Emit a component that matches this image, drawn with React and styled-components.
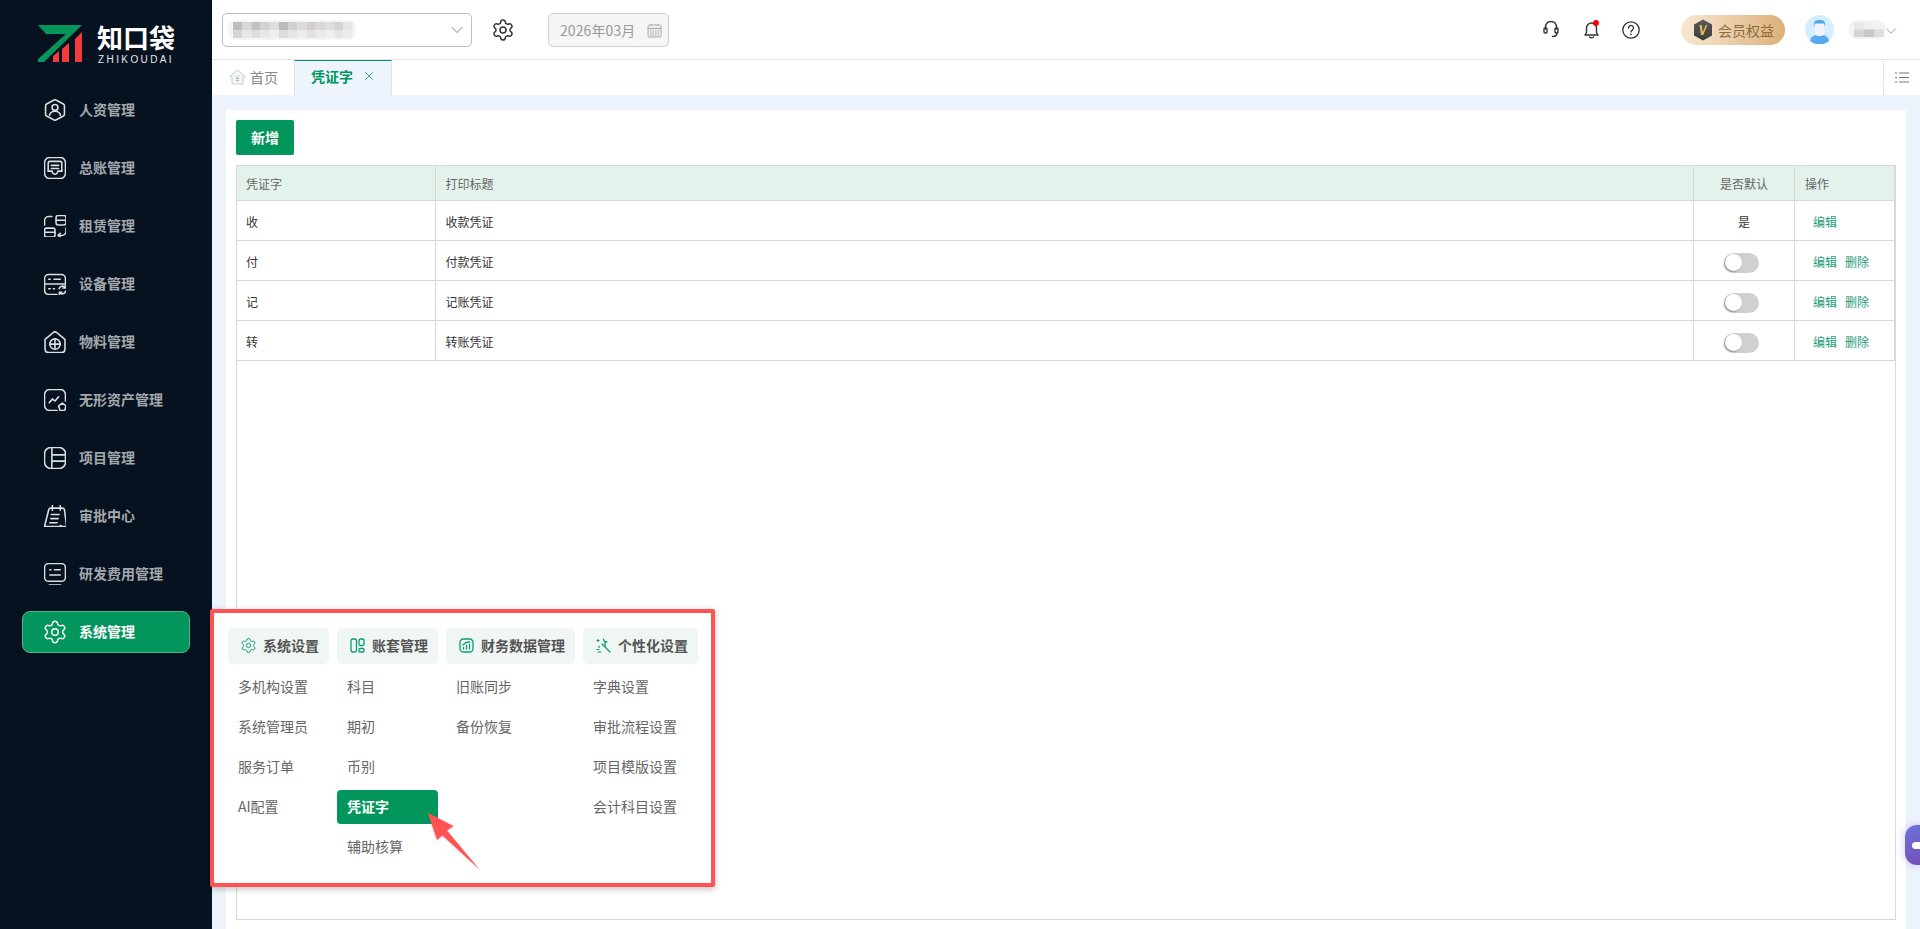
import React from "react";
import styled, { createGlobalStyle } from "styled-components";
import { Settings, ChevronDown, X } from "lucide-react";

const Global = createGlobalStyle`
  * { box-sizing: border-box; }
  html, body { margin: 0; padding: 0; height: 100%; overflow: hidden; }
  body { font-family: "Noto Sans CJK SC", "Noto Sans", sans-serif; color: #333; background: #edf3fd; }
`;

const Page = styled.div`position: relative; display: flex; width: 1920px; height: 929px; overflow: hidden;`;
const Sidebar = styled.aside`width: 212px; flex: none; background: #061220; display: flex; flex-direction: column;`;
const Logo = styled.div`height: 89px; padding: 25px 0 0 38px; display: flex; gap: 15px; align-items: flex-start;`;
const LogoWords = styled.div`display: flex; flex-direction: column; color: #fff;`;
const LogoCn = styled.div`font-size: 26px; font-weight: 700; line-height: 24px;`;
const LogoEn = styled.div`font-family: "Liberation Sans", sans-serif; font-size: 10px; line-height: 10px; letter-spacing: 2.4px; margin-top: 6px; margin-left: 1px; color: #e6e8ea;`;
const Nav = styled.nav`display: flex; flex-direction: column; gap: 16px; padding: 0 22px;`;
const NavItem = styled.div`
  height: 42px; display: flex; align-items: center; gap: 13px; padding-left: 21px; border-radius: 8px;
  border: 1px solid ${p => (p.$active ? "#4fb58d" : "transparent")};
  background: ${p => (p.$active ? "#03965c" : "transparent")};
  color: ${p => (p.$active ? "#fff" : "#a4a8ad")};
  font-size: 14px; font-weight: 700;
  svg { flex: none; color: ${p => (p.$active ? "#fff" : "#dcdee0")}; }
`;
const NavLabel = styled.span`padding-bottom: 2px;`;
const NavGear = styled(Settings)`margin: -2px;`;

const Content = styled.div`flex: 1; min-width: 0; display: flex; flex-direction: column;`;
const Header = styled.header`height: 60px; flex: none; background: #fff; border-bottom: 1px solid #e4e4e4; display: flex; align-items: center; padding: 0 20px 0 10px;`;
const SelectBox = styled.div`width: 250px; height: 34px; margin-top: 1px; border: 1px solid #bdbdbd; border-radius: 5px; display: flex; align-items: center; justify-content: space-between; padding: 0 4px 0 5px; svg.chev { color: #7a8a99; }`;
const GearBtn = styled.div`margin-left: 19px; display: flex; color: #333;`;
const DateBox = styled.div`margin-left: 33px; width: 121px; height: 34px; margin-top: 1px; border: 1px solid #cfcfcf; border-radius: 5px; background: #f5f5f5; color: #999; font-size: 14px; letter-spacing: 0.1px; display: flex; align-items: center; padding-left: 11px; gap: 12px;`;
const HeadRight = styled.div`margin-left: auto; display: flex; align-items: center;`;
const Tool = styled.div`display: flex; position: relative; color: #333; margin-right: ${p => p.$mr}px;`;
const RedDot = styled.span`position: absolute; top: 0; right: 0; width: 6px; height: 6px; background: #f00; border-radius: 50%;`;
const Vip = styled.div`width: 104px; height: 30px; border-radius: 15px; background: linear-gradient(90deg, #f8e8d3, #dcb079); display: flex; align-items: center; padding-left: 12px; gap: 5px; font-size: 14px; color: #8c6b40; margin-left: 41px; margin-right: 20px;`;
const NameBox = styled.div`display: flex; align-items: center; margin-left: 15px; color: #7a8a99; svg.chev { margin-left: -3px; margin-top: 3px; }`;

const Tabs = styled.div`height: 35px; flex: none; background: #fff; display: flex; align-items: stretch;`;
const HomeTab = styled.div`width: 82px; display: flex; align-items: center; padding: 0 0 2px 17px; gap: 4px; color: #888; font-size: 14px;`;
const ActiveTab = styled.div`width: 98px; background: #eef4fd; border: 1px solid #dfe3e8; border-top: 1px solid #03965c; border-bottom: none; display: flex; align-items: center; padding: 0 0 4px 16px; color: #03965c; font-size: 14px; font-weight: 700; gap: 9px; svg { stroke-width: 1.3; }`;
const TabMenu = styled.div`margin-left: auto; width: 37px; border-left: 1px solid #e6e6e6; display: flex; align-items: center; justify-content: center; color: #777;`;

const Main = styled.main`flex: 1; min-height: 0; padding: 15px 14px 0;`;
const Card = styled.section`height: 100%; background: #fff; padding: 10px 10px 9px; display: flex; flex-direction: column;`;
const AddBtn = styled.button`width: 58px; height: 35px; border: 0; border-radius: 2px; background: #03965c; color: #fff; font: 700 14px "Noto Sans CJK SC", sans-serif; padding: 0 0 2px; flex: none;`;
const Frame = styled.div`margin-top: 10px; flex: 1; border: 1px solid #d9d9d9;`;
const Table = styled.table`width: 100%; table-layout: fixed; border-collapse: collapse; font-size: 12px; margin-top: -1px; th:first-child, td:first-child { border-left: none; }`;
const Th = styled.th`height: 35px; background: #e4f2ec; border: 1px solid #d9d9d9; font-weight: 400; color: #666; text-align: ${p => (p.$center ? "center" : "left")}; padding: 0 0 0 ${p => (p.$center ? 0 : p.$pad || 9)}px; width: ${p => (p.$w ? `${p.$w}px` : "auto")};`;
const Td = styled.td`height: 40px; border: 1px solid #d9d9d9; color: #333; text-align: ${p => (p.$center ? "center" : "left")}; padding: 1px 0 0 ${p => (p.$center ? 0 : p.$pad || 9)}px;`;
const Switch = styled.span`display: inline-block; width: 35px; height: 20px; margin: 4px 5px 0 0; background: #d0d0d0; border-radius: 10px; vertical-align: middle; padding: 1px 0 0 1px;`;
const Knob = styled.span`display: block; width: 17px; height: 17px; background: #fff; border-radius: 50%; box-shadow: -1px 1px 2px rgba(0,0,0,.35);`;
const LinkAct = styled.a`color: #1f9b78; margin-right: 8px;`;

const Overlay = styled.div`position: absolute; left: 210px; top: 609px; width: 505px; height: 278px; border: 4px solid #ff5252; border-radius: 2px; background: #fff; box-shadow: 0 2px 6px rgba(0,0,0,.25); padding: 15px 14px; display: flex; gap: 8px;`;
const MenuCol = styled.div`width: ${p => p.$w}px; flex: none; display: flex; flex-direction: column; gap: 6px;`;
const Chip = styled.div`height: 36px; background: #eff6f3; border-radius: 5px; display: flex; align-items: center; padding: 0 0 2px 13px; gap: 7px; font-size: 14px; font-weight: 700; color: #555; svg { flex: none; color: #0f9a70; }`;
const ChipGear = styled(Settings)`margin: -1px;`;
const MenuItem = styled.div`height: 34px; border-radius: 4px; display: flex; align-items: center; padding: 0 0 2px 10px; font-size: 14px; color: ${p => (p.$active ? "#fff" : "#666")}; background: ${p => (p.$active ? "#03965c" : "transparent")}; font-weight: ${p => (p.$active ? 700 : 400)};`;
const ArrowSvg = styled.svg`position: absolute; left: 420px; top: 805px; filter: drop-shadow(0 1px 1px rgba(0,0,0,.15));`;
const ChatWidget = styled.div`position: absolute; right: 0; top: 825px; width: 15px; height: 40px; border-radius: 12px 0 0 12px; background: linear-gradient(160deg, #6a74dc, #7550b8); box-shadow: 0 0 8px rgba(100,90,220,.35); display: flex; align-items: center; padding-left: 7px;`;
const ChatDot = styled.span`width: 10px; height: 7px; background: #fff; border-radius: 4px 0 0 4px;`;

const Ic = ({ children, s = 22, box = "0.5 0.5 21 21", w = 1.5 }) => (
  <svg width={s} height={s} viewBox={box} fill="none" stroke="currentColor" strokeWidth={w} strokeLinecap="round" strokeLinejoin="round">{children}</svg>
);

const icons = {
  hr: <Ic><path d="M11 1 19 5.300a2 2 0 0 1 1 1.700v8a2 2 0 0 1-1 1.700L11 21l-8-4.300A2 2 0 0 1 2 15V7a2 2 0 0 1 1-1.700Z"/><circle cx="11" cy="8.500" r="2.800"/><path d="M5.800 16c.6-2.600 2.600-3.800 5.200-3.800s4.600 1.200 5.200 3.800"/></Ic>,
  ledger: <Ic><rect x="1" y="1" width="20" height="20" rx="5"/><path d="M4.500 14V6.200A1.500 1.500 0 0 1 6 4.700h10a1.500 1.500 0 0 1 1.500 1.500V14"/><path d="M7.500 8.500h7M7.500 11.500h7"/><path d="M4.500 14h3.700c.5 1.800 1.500 3 2.800 3s2.300-1.200 2.800-3h3.700"/></Ic>,
  lease: <Ic><path d="M1 10V6a4 4 0 0 1 4-4h3"/><rect x="12" y="1" width="9.500" height="9" rx="2"/><path d="M12 5.500h9.500"/><rect x="1" y="13" width="10" height="8.500" rx="2"/><path d="M1 17h10"/><path d="M21.500 13v3a4 4 0 0 1-4 4h-3"/><path d="m16 18-2 2 2 1.500"/></Ic>,
  device: <Ic><path d="M21 11V6a4 4 0 0 0-4-4H5a4 4 0 0 0-4 4v11a4 4 0 0 0 4 4h8"/><path d="M1 11h20"/><path d="M5 6.500h1.500M10 6.500h6M5 15.500h1.500M9.500 15.500h1"/><path d="M15 15.500a3 3 0 0 1 5.500-1M21 18a3 3 0 0 1-5.500 1"/><path d="M20.800 12.500v2.300h-2.300M15.200 21v-2.200h2.300"/></Ic>,
  material: <Ic><path d="M1.500 8.500 9 2.200a3 3 0 0 1 4 0l7.500 6.300V18a3 3 0 0 1-3 3h-13a3 3 0 0 1-3-3Z"/><circle cx="11" cy="13" r="5"/><path d="M11 8v10M6 13h10"/></Ic>,
  asset: <Ic><path d="M13 21H6a5 5 0 0 1-5-5V6a5 5 0 0 1 5-5h10a5 5 0 0 1 5 5v6"/><path d="M5.500 13.500 8.500 10l2.500 2 3.500-4"/><path d="m18 14 3.500 2.700-1.300 4.300h-4.400l-1.300-4.300Z"/></Ic>,
  project: <Ic><rect x="1" y="1" width="20" height="20" rx="6"/><path d="M8 1v20M8 8h13M8 14h13"/></Ic>,
  approve: <Ic><path d="M1 21 5 5a2 2 0 0 1 2-1.500h11A2 2 0 0 1 20 5l2 15a1 1 0 0 1-1 1Z"/><path d="M8.500 1v4.500M16 1v4.500M7.500 9.500H15M7 13.500h7M6 17.500h7"/><path d="m17.500 21-1.500-1"/></Ic>,
  rd: <Ic><rect x="1" y="1" width="20" height="17" rx="4"/><path d="M6 7h1M10.500 7H16M6 12h10M5.500 21.500h11"/></Ic>,
};

const navs = [
  ["人资管理", "hr"], ["总账管理", "ledger"], ["租赁管理", "lease"], ["设备管理", "device"], ["物料管理", "material"],
  ["无形资产管理", "asset"], ["项目管理", "project"], ["审批中心", "approve"], ["研发费用管理", "rd"],
];

const Mosaic = ({ w, h, cell, rows, bg }) => (
  <svg width={w} height={h} viewBox={`0 0 ${w} ${h}`}>
    <defs><filter id={`b${w}`}><feGaussianBlur stdDeviation="0.6" /></filter></defs>
    <rect width={w} height={h} rx={h / 2.5} fill={bg} />
    <g filter={`url(#b${w})`}>
      {rows.map((r, i) => r.map((c, j) => (
        <rect key={`${i}-${j}`} x={5 + j * cell} y={2 + i * (h - 4) / rows.length} width={cell} height={(h - 4) / rows.length} fill={c} />
      )))}
    </g>
  </svg>
);

const CalendarIcon = () => (
  <svg width="15" height="15" viewBox="0 0 15 15" fill="none" stroke="#aaa" strokeWidth="1">
    <rect x="1" y="2" width="13" height="12" rx="1.500" fill="#eee" />
    <path d="M1 5.500h13M4 1v2M11 1v2" />
    <path d="M3 8h9M3 10h9M3 12h9" strokeDasharray="1.500 1" />
  </svg>
);

const Headset = () => (
  <svg width="16" height="17" viewBox="0 0 16 17" fill="none" stroke="#333" strokeWidth="1.400" strokeLinecap="round">
    <path d="M2.500 8V6a5.500 5.500 0 0 1 11 0v2" />
    <rect x="1" y="7" width="3" height="5" rx="1" />
    <rect x="12" y="7" width="3" height="5" rx="1" />
    <path d="M14 12c0 2.500-2 3.500-4.500 3.500" />
  </svg>
);
const Bell = () => (
  <svg width="15" height="19" viewBox="0 0 15 19" fill="none" stroke="#333" strokeWidth="1.400" strokeLinejoin="round" strokeLinecap="round">
    <path d="M1 15h13l-1.500-2.500V8a5 5 0 0 0-10 0v4.500Z" />
    <path d="M5.500 17c.5 1 3.500 1 4 0" />
  </svg>
);
const Help = () => (
  <svg width="18" height="18" viewBox="0 0 18 18" fill="none" stroke="#333" strokeWidth="1.300" strokeLinecap="round">
    <circle cx="9" cy="9" r="8.200" />
    <path d="M6.500 7a2.500 2.500 0 1 1 3.800 2.100C9.400 9.700 9 10 9 11" />
    <path d="M9 13.200v.3" strokeWidth="1.600" />
  </svg>
);
const VipBadge = () => (
  <svg width="20" height="22" viewBox="0 0 20 22">
    <defs><linearGradient id="vipG" x1="0" y1="0" x2="0" y2="1"><stop offset="0" stopColor="#5a5a58" /><stop offset="1" stopColor="#3c3c3a" /></linearGradient></defs>
    <path d="M10 0.500 19 5.500v11L10 21.500 1 16.500v-11Z" fill="url(#vipG)" />
    <path d="M6.500 6h2.300l1 7 3-7h1.700l-4.300 10H8Z" fill="#e4b860" />
  </svg>
);
const Avatar = () => (
  <svg width="29" height="29" viewBox="0 0 29 29">
    <circle cx="14.500" cy="14.500" r="14.500" fill="#d4edff" />
    <path d="M5 26c1-5 5-6.500 9.500-6.500S23 21 24 26a14.500 14.500 0 0 1-19 0Z" fill="#56abf6" />
    <rect x="9.500" y="7" width="10" height="14" rx="4" fill="#f1f4fa" />
    <path d="M9 12V8.500C9 6 11 5 14.500 5S20 6 20 8.500V12l-1-3.500H10Z" fill="#4fa3f0" />
  </svg>
);
const HomeIcon = () => (
  <svg width="17" height="16" viewBox="0 0 17 16" fill="none" stroke="#c9ccd0" strokeWidth="1" strokeLinejoin="round">
    <path d="M1 7.500 8.500 1 16 7.500h-2V15H3V7.500Z" fill="#f6f7f8" />
    <path d="M6.500 6.500 8.500 9l2-2.500M6.500 9.500h4M6.500 11.500h4M8.500 9v4" strokeWidth=".8" stroke="#b8bcc0" />
  </svg>
);
const ListIcon = () => (
  <svg width="14" height="11" viewBox="0 0 14 11" stroke="#777" strokeWidth="1" fill="none">
    <path d="M0 1h2M4 1h10M0 5.500h2M4 5.500h10M0 10h2M4 10h10" />
  </svg>
);

const LayoutIcon = () => (
  <Ic s={15} box="0 0 15 15" w={1.300}><rect x="1" y="1" width="5.500" height="13" rx="1.500" /><rect x="9" y="1" width="5" height="6.500" rx="1.500" /><rect x="9" y="10.500" width="5" height="3.500" rx="1.200" /></Ic>
);
const ChartIcon = () => (
  <Ic s={15} box="0 0 15 15" w={1.300}><rect x="1" y="1" width="13" height="13" rx="3.500" /><path d="M4.500 11V9.500M7.500 11V7.500M10.500 11V6.500M4 7l3-2.500L10.500 4" /></Ic>
);
const WandIcon = () => (
  <Ic s={15} box="0 0 15 15" w={1.200}><path d="m6 6 8 8" /><path d="m7.500 1 .8 2.500 2.500.2-2 1.600.6 2.500" /><path d="M2 1.500v2M1 2.500h2M3 8v1.500M2 14h3M1 11.500h2" /></Ic>
);

const columns = [
  { w: 101, head: "系统设置", icon: <ChipGear size={17} strokeWidth={1.400} />, items: ["多机构设置", "系统管理员", "服务订单", "AI配置"] },
  { w: 101, head: "账套管理", icon: <LayoutIcon />, items: ["科目", "期初", "币别", "凭证字", "辅助核算"], active: "凭证字" },
  { w: 129, head: "财务数据管理", icon: <ChartIcon />, items: ["旧账同步", "备份恢复"] },
  { w: 115, head: "个性化设置", icon: <WandIcon />, items: ["字典设置", "审批流程设置", "项目模版设置", "会计科目设置"] },
];

const rows = [
  ["收", "收款凭证", true],
  ["付", "付款凭证", false],
  ["记", "记账凭证", false],
  ["转", "转账凭证", false],
];

const g = ["#bdbdc0", "#d8d8d8", "#c2c2c6", "#d2d2d2", "#dedede", "#bcbcc0", "#d0d0d4", "#dcdcdc", "#d2cec9", "#d8d8dc", "#dedede", "#d4d4d4", "#e6e6e6"];
const g2 = ["#d6d6d6", "#e8e8e8", "#dedede", "#e8e8e8", "#efefef", "#dcdcdc", "#e6e6e6", "#ececec", "#e4e2e0", "#eaeaea", "#efefef", "#e6e6e6", "#ececec"];

export default function App() {
  return (
    <Page>
      <Global />
      <Sidebar>
        <Logo>
          <svg width="44" height="37" viewBox="0 0 44 37">
            <path d="M0 0H44L6 37H0V34L28 9H8Z" fill="#06965a" />
            <path d="M15 37V31l6-5V37ZM24 37V24l7-6V37ZM37 37V14l7-7V37Z" fill="#f33b3b" />
          </svg>
          <LogoWords>
            <LogoCn>知口袋</LogoCn>
            <LogoEn>ZHIKOUDAI</LogoEn>
          </LogoWords>
        </Logo>
        <Nav>
          {navs.map(([label, key]) => (
            <NavItem key={label}>{icons[key]}<NavLabel>{label}</NavLabel></NavItem>
          ))}
          <NavItem $active><NavGear size={26} strokeWidth={1.300} /><NavLabel>系统管理</NavLabel></NavItem>
        </Nav>
      </Sidebar>
      <Content>
        <Header>
          <SelectBox>
            <Mosaic w={128} h={20} cell={9.200} rows={[g, g2]} bg="#f5f5f5" />
            <ChevronDown className="chev" size={20} strokeWidth={1.200} />
          </SelectBox>
          <GearBtn><Settings size={24} strokeWidth={1.500} /></GearBtn>
          <DateBox>2026年03月<CalendarIcon /></DateBox>
          <HeadRight>
            <Tool $mr={25}><Headset /></Tool>
            <Tool $mr={23}><Bell /><RedDot /></Tool>
            <Tool $mr={0}><Help /></Tool>
            <Vip><VipBadge />会员权益</Vip>
            <Avatar />
            <NameBox>
              <Mosaic w={36} h={19} cell={10} rows={[["#e8e8e8", "#f0f0f0", "#f2f2f2"], ["#d4d4d6", "#c6c8cc", "#dedede"]]} bg="#f4f4f4" />
              <ChevronDown className="chev" size={18} strokeWidth={1.100} />
            </NameBox>
          </HeadRight>
        </Header>
        <Tabs>
          <HomeTab><HomeIcon />首页</HomeTab>
          <ActiveTab>凭证字<X size={14} /></ActiveTab>
          <TabMenu><ListIcon /></TabMenu>
        </Tabs>
        <Main>
          <Card>
            <AddBtn>新增</AddBtn>
            <Frame>
              <Table>
                <thead>
                  <tr>
                    <Th $w={198}>凭证字</Th>
                    <Th $pad={10}>打印标题</Th>
                    <Th $center $w={101}>是否默认</Th>
                    <Th $w={100} $pad={10}>操作</Th>
                  </tr>
                </thead>
                <tbody>
                  {rows.map(([a, b, def]) => (
                    <tr key={a}>
                      <Td>{a}</Td>
                      <Td $pad={10}>{b}</Td>
                      <Td $center>{def ? "是" : <Switch><Knob /></Switch>}</Td>
                      <Td $pad={18}>
                        <LinkAct>编辑</LinkAct>
                        {!def && <LinkAct>删除</LinkAct>}
                      </Td>
                    </tr>
                  ))}
                </tbody>
              </Table>
            </Frame>
          </Card>
        </Main>
      </Content>
      <Overlay>
        {columns.map(col => (
          <MenuCol key={col.head} $w={col.w}>
            <Chip>{col.icon}{col.head}</Chip>
            {col.items.map(it => (
              <MenuItem key={it} $active={it === col.active}>{it}</MenuItem>
            ))}
          </MenuCol>
        ))}
      </Overlay>
      <ArrowSvg width="62" height="68" viewBox="0 0 62 68">
        <path d="M7.700 7.700 33.500 21l-6.500 4.500L60 65 22.500 30.500 17 35Z" fill="#ff5252" />
      </ArrowSvg>
      <ChatWidget><ChatDot /></ChatWidget>
    </Page>
  );
}
